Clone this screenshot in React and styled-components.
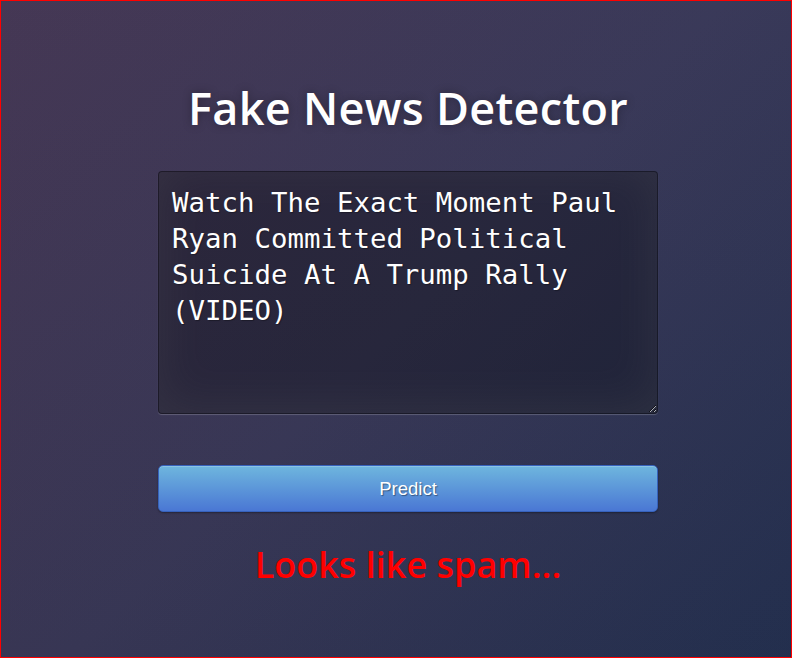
import styled, { createGlobalStyle } from 'styled-components'

const Global = createGlobalStyle`
  html, body {
    margin: 0;
    height: 100%;
  }
  body {
    box-sizing: border-box;
    border: 1px solid #ff0000;
    font-family: 'Open Sans', 'Liberation Sans', sans-serif;
    background: linear-gradient(to bottom, rgba(57, 80, 140, 0.06), rgba(20, 30, 60, 0.08)),
      linear-gradient(135deg, #463651 0%, #3a3856 50%, #24304f 100%);
  }
  #root {
    height: 100%;
  }
`

const Page = styled.main`
  height: 100%;
  display: flex;
  justify-content: center;
  padding-left: 24px;
  box-sizing: border-box;
`

const Form = styled.div`
  width: 500px;
  display: flex;
  flex-direction: column;
  align-items: center;
  padding-top: 77px;
`

const Title = styled.h1`
  margin: 0 0 33px;
  font-size: 45px;
  font-weight: 600;
  line-height: 60px;
  color: #fff;
  letter-spacing: 0.3px;
  text-shadow: 0 0 10px rgba(0, 0, 0, 0.3);
`

const Input = styled.textarea`
  width: 100%;
  height: 243px;
  box-sizing: border-box;
  padding: 13px 13px;
  margin: 0 0 51px;
  background: rgba(0, 0, 0, 0.3);
  border: 1px solid rgba(0, 0, 0, 0.3);
  border-radius: 4px;
  outline: none;
  color: #fff;
  font-family: 'DejaVu Sans Mono', monospace;
  font-size: 27.4px;
  line-height: 36px;
  text-shadow: 1px 1px 1px rgba(0, 0, 0, 0.3);
  box-shadow: inset 0 -5px 45px rgba(100, 100, 100, 0.2), 0 1px 1px rgba(255, 255, 255, 0.2);
`

const Button = styled.button`
  width: 100%;
  height: 47px;
  border: 1px solid #3762bc;
  border-radius: 5px;
  background: linear-gradient(to bottom, #6eb6de, #4a77d4);
  color: #fff;
  font-family: 'Liberation Sans', Arial, sans-serif;
  font-size: 18.5px;
  text-shadow: 1px 1px 1px rgba(0, 0, 0, 0.4);
  box-shadow: inset 0 1px 0 rgba(255, 255, 255, 0.2), 0 1px 2px rgba(0, 0, 0, 0.35);
  cursor: pointer;
`

const Result = styled.p`
  margin: 29px 0 0;
  color: #ff0000;
  font-size: 36px;
  font-weight: 600;
  line-height: 48px;
`

export default function App() {
  return (
    <Page>
      <Global />
      <Form>
        <Title>Fake News Detector</Title>
        <Input
          defaultValue="Watch The Exact Moment Paul Ryan Committed Political Suicide At A Trump Rally (VIDEO)"
        />
        <Button>Predict</Button>
        <Result>Looks like spam...</Result>
      </Form>
    </Page>
  )
}
